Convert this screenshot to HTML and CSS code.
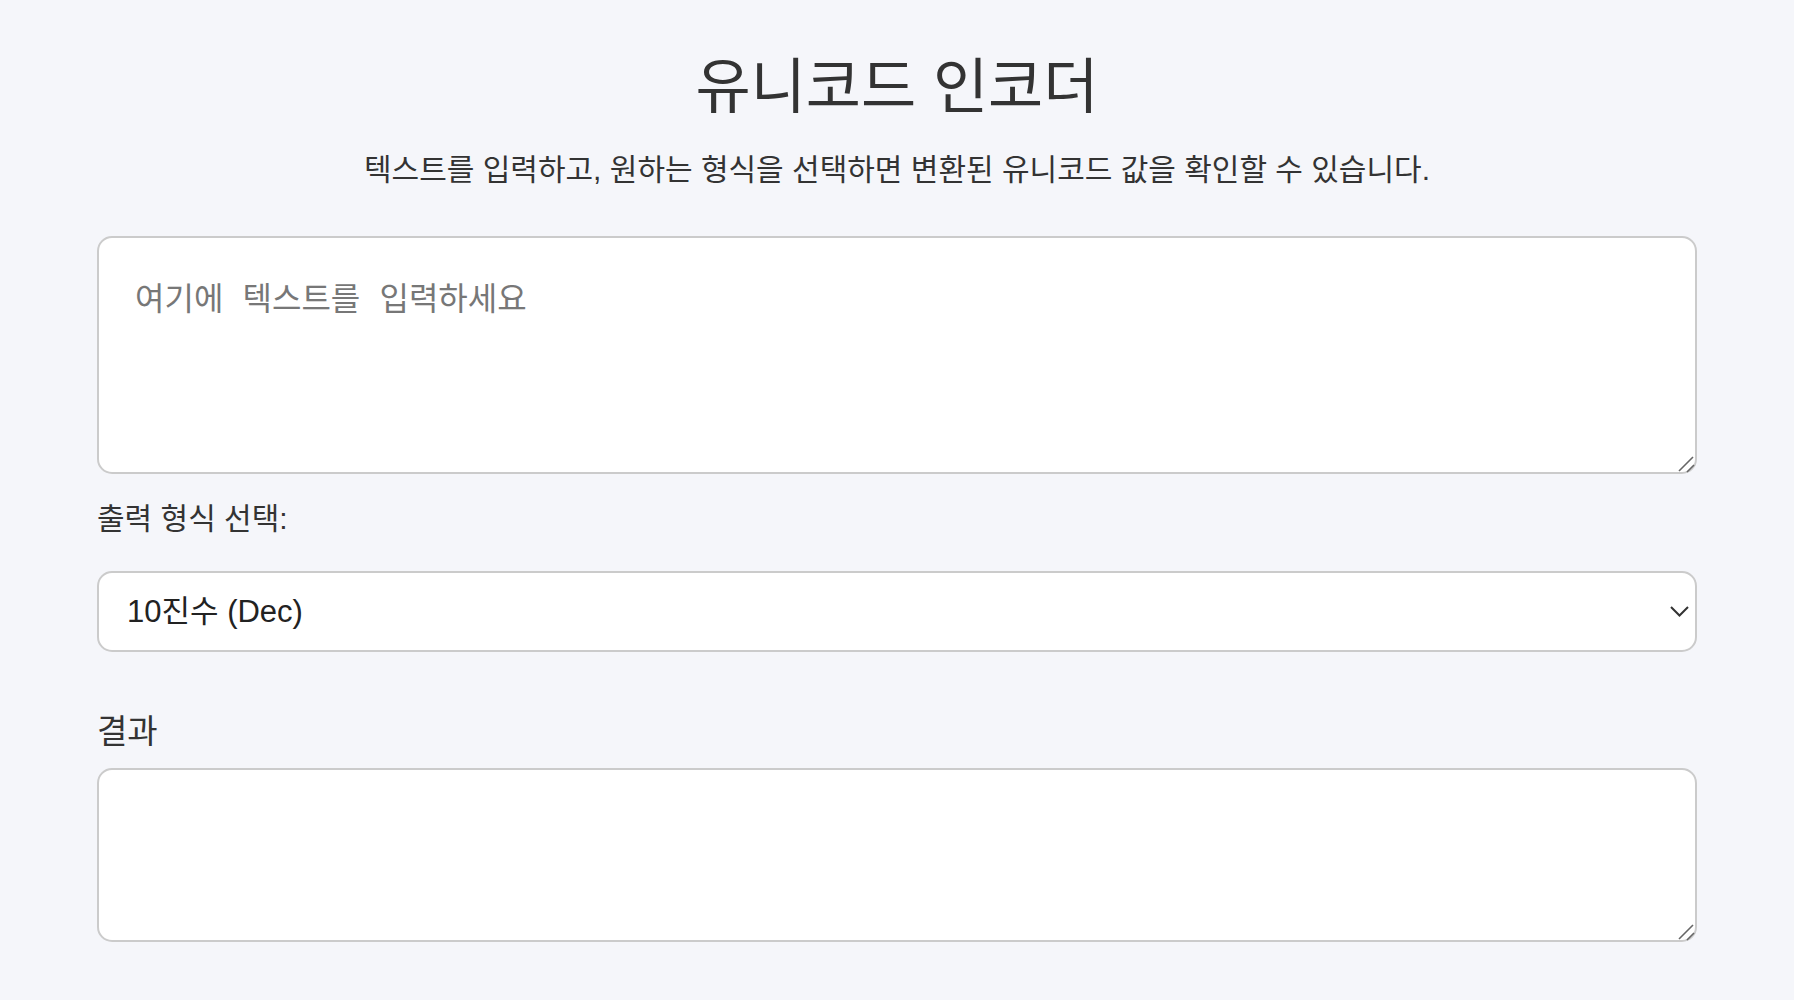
FILE: index.html
```html
<!DOCTYPE html>
<html lang="ko">
<head>
<meta charset="utf-8">
<title>유니코드 인코더</title>
<link rel="stylesheet" href="styles.css">
</head>
<body>
<main class="container">
  <h1 class="title">유니코드 인코더</h1>
  <p class="subtitle">텍스트를 입력하고, 원하는 형식을 선택하면 변환된 유니코드 값을 확인할 수 있습니다.</p>
  <div class="field-wrap input-wrap">
    <textarea class="text-field input-area" placeholder="여기에 텍스트를 입력하세요"></textarea>
    <svg class="grabber" width="20" height="20" viewBox="0 0 20 20"><line x1="2" y1="17" x2="16" y2="3" stroke="#666" stroke-width="1.6"/><line x1="10" y1="18" x2="17" y2="11" stroke="#666" stroke-width="1.6"/></svg>
  </div>
  <label class="format-label" for="format">출력 형식 선택:</label>
  <div class="select-wrap">
    <select id="format" class="format-select">
      <option>10진수 (Dec)</option>
      <option>16진수 (Hex)</option>
    </select>
    <svg class="chevron" width="19" height="11" viewBox="0 0 19 11"><polyline points="1,1 9.5,9.5 18,1" fill="none" stroke="#333" stroke-width="2"/></svg>
  </div>
  <h2 class="result-label">결과</h2>
  <div class="field-wrap output-wrap">
    <textarea class="text-field output-area" readonly></textarea>
    <svg class="grabber" width="20" height="20" viewBox="0 0 20 20"><line x1="2" y1="17" x2="16" y2="3" stroke="#666" stroke-width="1.6"/><line x1="10" y1="18" x2="17" y2="11" stroke="#666" stroke-width="1.6"/></svg>
  </div>
</main>
</body>
</html>
```

FILE: styles.css
```css
html, body {
  margin: 0;
  padding: 0;
  background: #f5f6fa;
}

body {
  font-family: "Liberation Sans", "Noto Sans CJK KR", sans-serif;
  color: #333;
}

.container {
  width: 1600px;
  margin: 0 auto;
  display: flex;
  flex-direction: column;
}

.title {
  margin: 52px 0 0;
  font-size: 60px;
  line-height: 72px;
  font-weight: 400;
  text-align: center;
  color: #333;
}

.subtitle {
  margin: 25px 0 0;
  font-size: 30px;
  line-height: 42px;
  text-align: center;
  color: #333;
}

.field-wrap {
  position: relative;
}

.text-field {
  display: block;
  box-sizing: border-box;
  width: 100%;
  height: 100%;
  border: 2px solid #cbcbcb;
  border-radius: 15px;
  background: #fff;
  padding: 35px 36px;
  font-family: "Liberation Mono", "Noto Sans CJK KR", monospace;
  font-size: 32px;
  color: #333;
  outline: none;
  resize: none;
}

.text-field::placeholder {
  color: #777;
}

.grabber {
  position: absolute;
  right: 0;
  bottom: 0;
}

.input-wrap {
  margin-top: 45px;
  height: 238px;
}

.format-label {
  margin-top: 24px;
  font-size: 30px;
  line-height: 42px;
  color: #333;
}

.select-wrap {
  position: relative;
  margin-top: 31px;
}

.format-select {
  box-sizing: border-box;
  width: 100%;
  height: 81px;
  appearance: none;
  -webkit-appearance: none;
  border: 2px solid #cbcbcb;
  border-radius: 15px;
  background: #fff;
  padding: 0 28px;
  font-family: "Liberation Sans", "Noto Sans CJK KR", sans-serif;
  font-size: 31px;
  color: #222;
  outline: none;
}

.chevron {
  position: absolute;
  right: 8px;
  top: 35px;
}

.result-label {
  margin: 57px 0 0;
  font-size: 33px;
  line-height: 46px;
  font-weight: 400;
  color: #333;
}

.output-wrap {
  margin-top: 13px;
  height: 174px;
}
```
